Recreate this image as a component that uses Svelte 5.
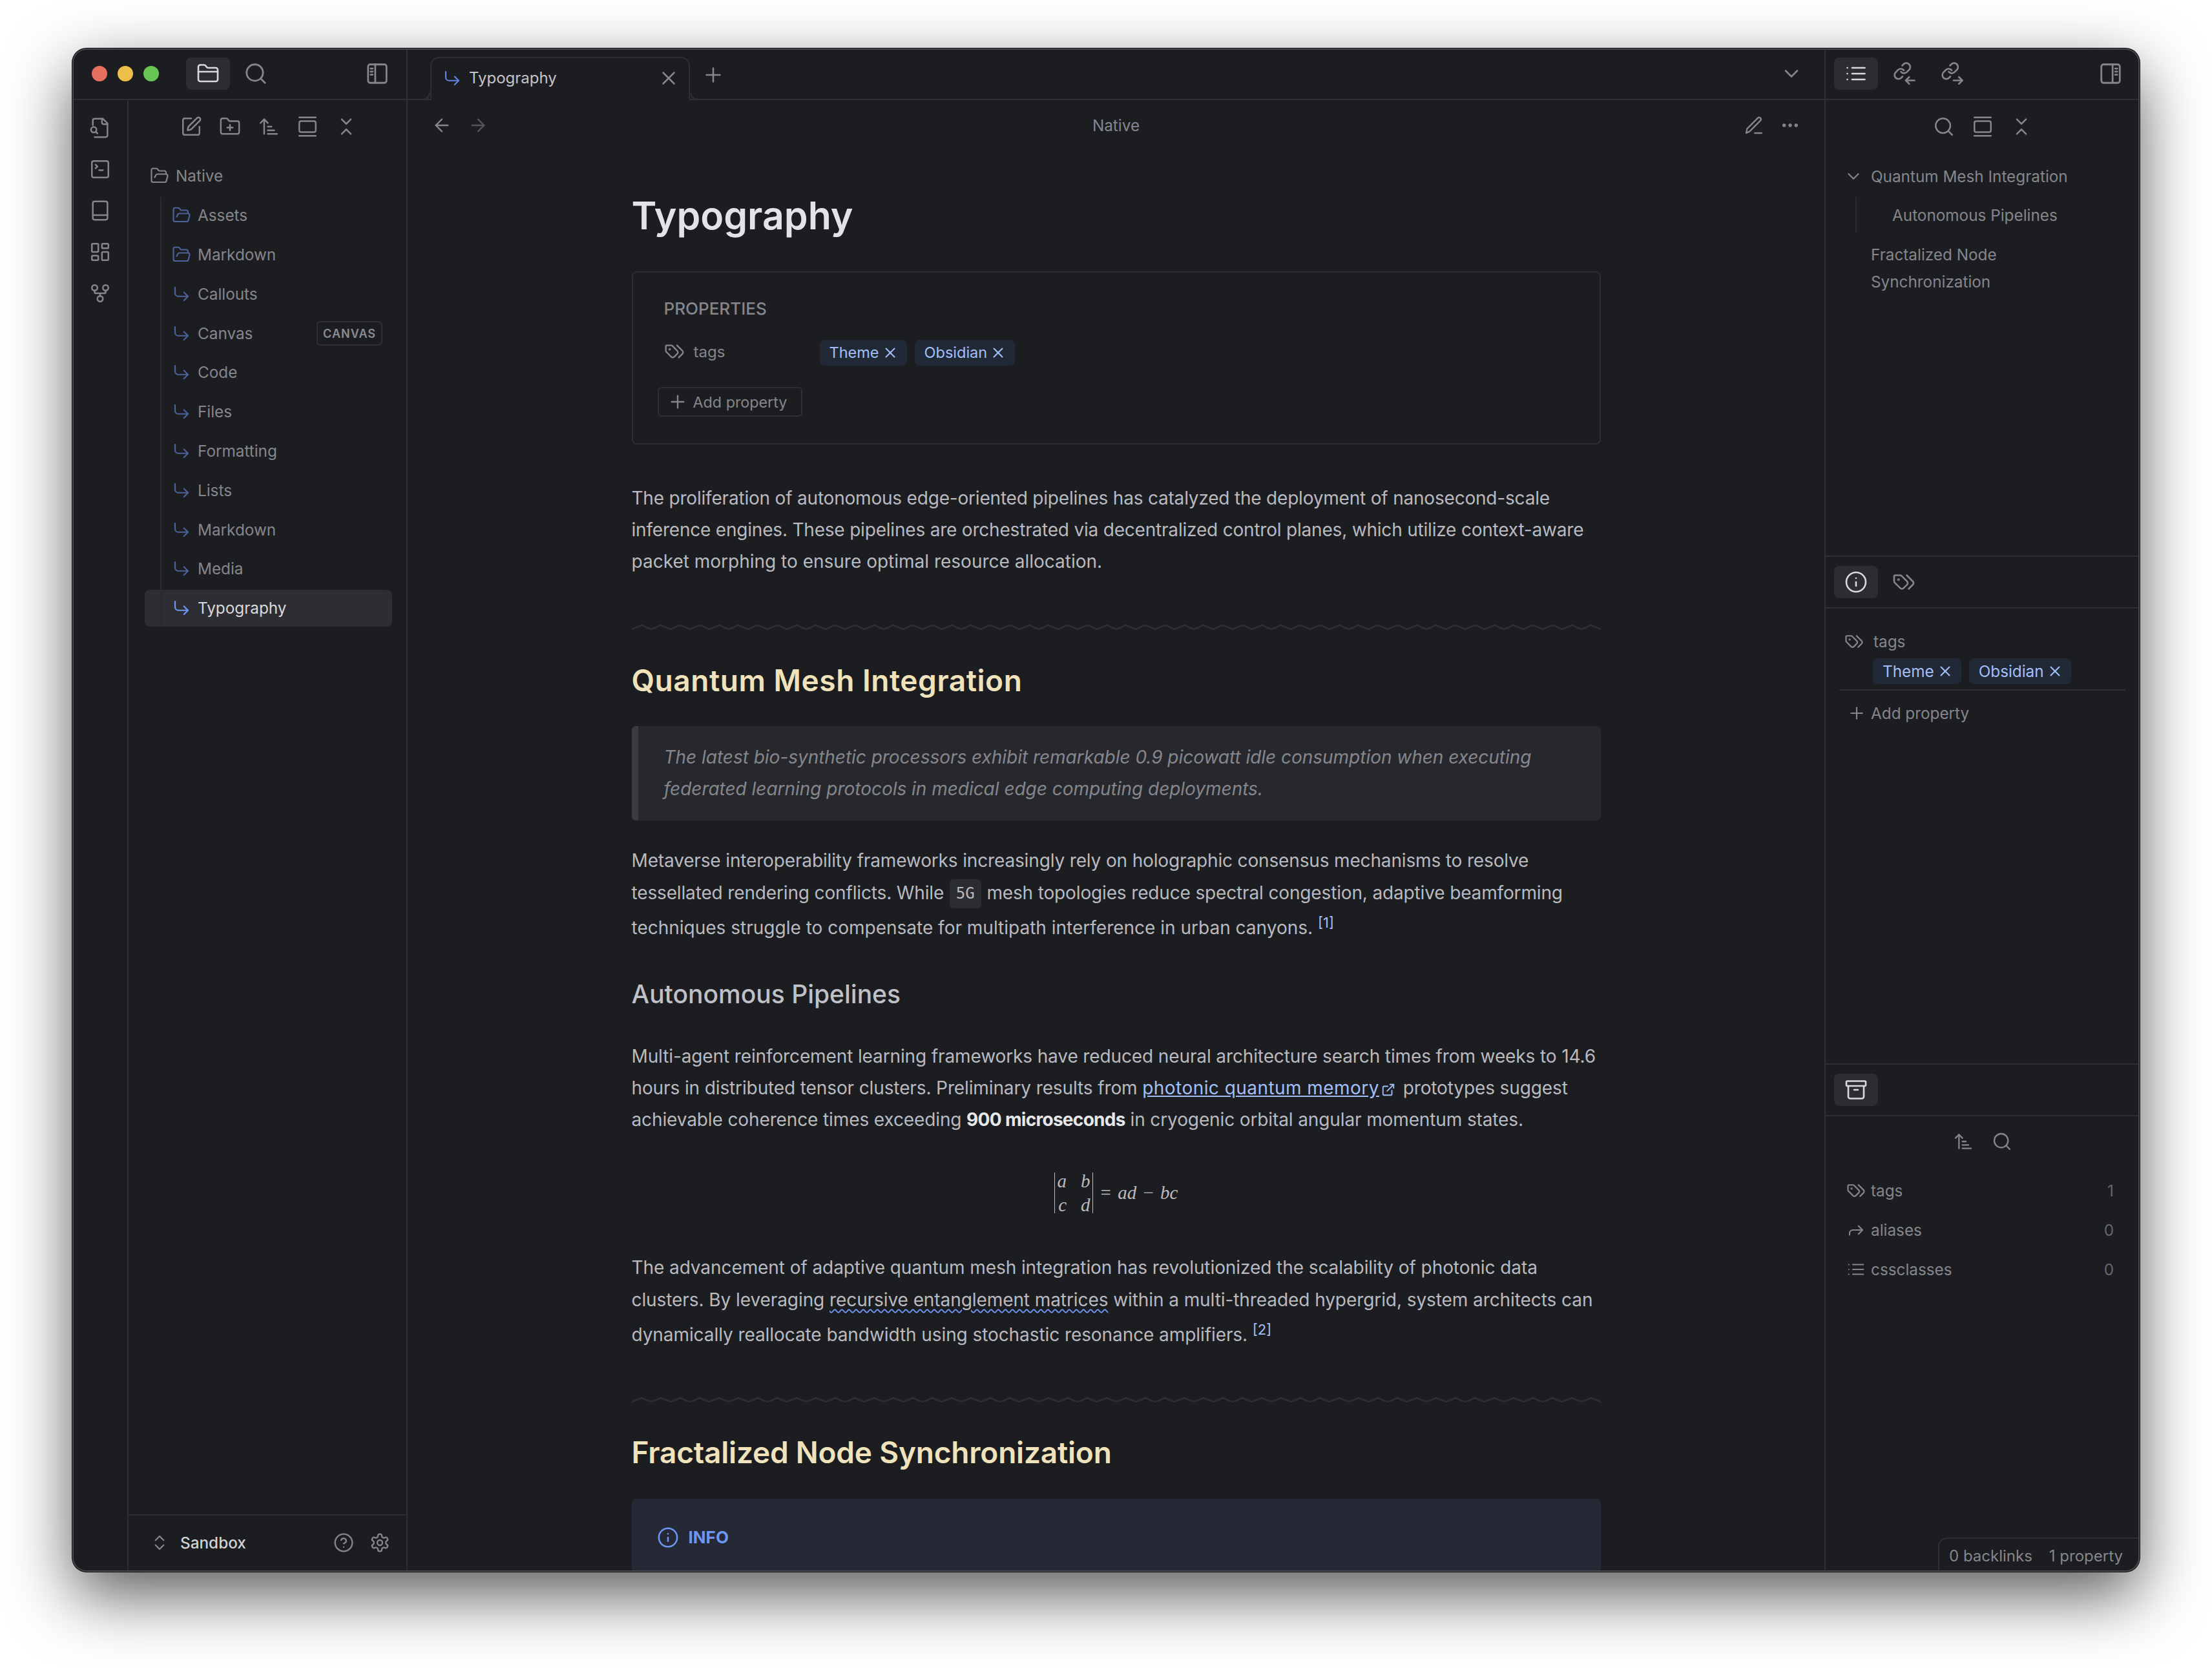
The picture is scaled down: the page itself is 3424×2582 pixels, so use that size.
<script>
	const icons = {
		folder: '<path d="M20 20a2 2 0 0 0 2-2V8a2 2 0 0 0-2-2h-7.9a2 2 0 0 1-1.69-.9L9.6 3.9A2 2 0 0 0 7.93 3H4a2 2 0 0 0-2 2v13a2 2 0 0 0 2 2Z"/><path d="M2 10h20"/>',
		search: '<circle cx="11" cy="11" r="8"/><path d="m21 21-4.3-4.3"/>',
		sideLeft: '<rect x="3" y="3" width="18" height="18" rx="2"/><path d="M10 3v18M5.5 7h2M5.5 10h2M5.5 13h2"/>',
		sideRight: '<rect x="3" y="3" width="18" height="18" rx="2"/><path d="M14 3v18M16.5 7h2M16.5 10h2M16.5 13h2"/>',
		fileSearch: '<path d="M14 2v4a2 2 0 0 0 2 2h4"/><path d="M6 22h12a2 2 0 0 0 2-2V7l-5-5H6a2 2 0 0 0-2 2v5"/><path d="m9 18-1.5-1.5"/><circle cx="5" cy="14" r="3"/>',
		terminal: '<path d="m7 11 2-2-2-2"/><path d="M11 13h4"/><rect x="3" y="3" width="18" height="18" rx="2"/>',
		book: '<rect x="4" y="2" width="16" height="20" rx="2"/><path d="M4 17h16"/>',
		dashboard: '<rect x="3" y="3" width="7" height="9" rx="1"/><rect x="14" y="3" width="7" height="5" rx="1"/><rect x="14" y="12" width="7" height="9" rx="1"/><rect x="3" y="16" width="7" height="5" rx="1"/>',
		fork: '<circle cx="12" cy="18" r="3"/><circle cx="6" cy="6" r="3"/><circle cx="18" cy="6" r="3"/><path d="M18 9v2c0 .6-.4 1-1 1H7c-.6 0-1-.4-1-1V9"/><path d="M12 12v3"/>',
		edit: '<path d="M12 3H5a2 2 0 0 0-2 2v14a2 2 0 0 0 2 2h14a2 2 0 0 0 2-2v-7"/><path d="M18.375 2.625a1 1 0 0 1 3 3l-9.013 9.014a2 2 0 0 1-.853.505l-2.873.84a.5.5 0 0 1-.62-.62l.84-2.873a2 2 0 0 1 .506-.852z"/>',
		folderPlus: '<path d="M12 10v6"/><path d="M9 13h6"/><path d="M20 20a2 2 0 0 0 2-2V8a2 2 0 0 0-2-2h-7.9a2 2 0 0 1-1.69-.9L9.6 3.9A2 2 0 0 0 7.93 3H4a2 2 0 0 0-2 2v13a2 2 0 0 0 2 2Z"/>',
		sort: '<path d="m3 8 4-4 4 4"/><path d="M7 4v16"/><path d="M11 12h4"/><path d="M11 16h7"/><path d="M11 20h10"/>',
		expand: '<path d="M3 2h18"/><rect x="3" y="6" width="18" height="12" rx="2"/><path d="M3 22h18"/>',
		collapse: '<path d="m7 20 5-5 5 5"/><path d="m7 4 5 5 5-5"/>',
		folderOpen: '<path d="m6 14 1.5-2.9A2 2 0 0 1 9.24 10H20a2 2 0 0 1 1.94 2.5l-1.54 6a2 2 0 0 1-1.95 1.5H4a2 2 0 0 1-2-2V5a2 2 0 0 1 2-2h3.9a2 2 0 0 1 1.69.9l.81 1.2a2 2 0 0 0 1.67.9H18a2 2 0 0 1 2 2v2"/>',
		corner: '<path d="m15 10 5 5-5 5"/><path d="M4 4v7a4 4 0 0 0 4 4h12"/>',
		x: '<path d="M18 6 6 18"/><path d="m6 6 12 12"/>',
		plus: '<path d="M5 12h14"/><path d="M12 5v14"/>',
		left: '<path d="m12 19-7-7 7-7"/><path d="M19 12H5"/>',
		right: '<path d="M5 12h14"/><path d="m12 5 7 7-7 7"/>',
		down: '<path d="m6 9 6 6 6-6"/>',
		pencil: '<path d="M3 21l1-5L16.5 3.5a2 2 0 0 1 3 3L7 19z"/><path d="M13 21h8"/>',
		dots: '<circle cx="5" cy="12" r="1"/><circle cx="12" cy="12" r="1"/><circle cx="19" cy="12" r="1"/>',
		list: '<path d="M3 12h.01"/><path d="M3 18h.01"/><path d="M3 6h.01"/><path d="M8 12h13"/><path d="M8 18h13"/><path d="M8 6h13"/>',
		linkIn: '<path d="M9 10a4 4 0 0 0 6 .4l2.4-2.4a4 4 0 0 0-5.7-5.7l-1.4 1.4"/><path d="M12 8.6a4 4 0 0 0-6-.4L3.6 10.6a4 4 0 0 0 5.7 5.7l1.4-1.4"/><path d="M23 19h-9"/><path d="m17.5 15.5-3.5 3.5 3.5 3.5"/>',
		linkOut: '<path d="M9 10a4 4 0 0 0 6 .4l2.4-2.4a4 4 0 0 0-5.7-5.7l-1.4 1.4"/><path d="M12 8.6a4 4 0 0 0-6-.4L3.6 10.6a4 4 0 0 0 5.7 5.7l1.4-1.4"/><path d="M14 19h9"/><path d="m19.5 15.5 3.5 3.5-3.5 3.5"/>',
		tags: '<path d="m15 5 6.3 6.3a2.4 2.4 0 0 1 0 3.4L17 19"/><path d="M9.586 5.586A2 2 0 0 0 8.172 5H3a1 1 0 0 0-1 1v5.172a2 2 0 0 0 .586 1.414L8.29 18.29a2.426 2.426 0 0 0 3.42 0l3.58-3.58a2.426 2.426 0 0 0 0-3.42z"/><circle cx="6.5" cy="9.5" r=".5"/>',
		info: '<circle cx="12" cy="12" r="10"/><path d="M12 16v-4"/><path d="M12 8h.01"/>',
		archive: '<rect x="2" y="3" width="20" height="5" rx="1"/><path d="M4 8v11a2 2 0 0 0 2 2h12a2 2 0 0 0 2-2V8"/><path d="M10 12h4"/>',
		forward: '<path d="m15 17 5-5-5-5"/><path d="M4 18v-2a4 4 0 0 1 4-4h12"/>',
		help: '<circle cx="12" cy="12" r="10"/><path d="M9.09 9a3 3 0 0 1 5.83 1c0 2-3 3-3 3"/><path d="M12 17h.01"/>',
		gear: '<path d="M12.22 2h-.44a2 2 0 0 0-2 2v.18a2 2 0 0 1-1 1.73l-.43.25a2 2 0 0 1-2 0l-.15-.08a2 2 0 0 0-2.73.73l-.22.38a2 2 0 0 0 .73 2.73l.15.1a2 2 0 0 1 1 1.72v.51a2 2 0 0 1-1 1.74l-.15.09a2 2 0 0 0-.73 2.73l.22.38a2 2 0 0 0 2.73.73l.15-.08a2 2 0 0 1 2 0l.43.25a2 2 0 0 1 1 1.73V20a2 2 0 0 0 2 2h.44a2 2 0 0 0 2-2v-.18a2 2 0 0 1 1-1.73l.43-.25a2 2 0 0 1 2 0l.15.08a2 2 0 0 0 2.73-.73l.22-.39a2 2 0 0 0-.73-2.73l-.15-.08a2 2 0 0 1-1-1.74v-.5a2 2 0 0 1 1-1.74l.15-.09a2 2 0 0 0 .73-2.73l-.22-.38a2 2 0 0 0-2.73-.73l-.15.08a2 2 0 0 1-2 0l-.43-.25a2 2 0 0 1-1-1.73V4a2 2 0 0 0-2-2z"/><circle cx="12" cy="12" r="3"/>',
		updown: '<path d="m7 15 5 5 5-5"/><path d="m7 9 5-5 5 5"/>',
		external: '<path d="M15 3h6v6"/><path d="M10 14 21 3"/><path d="M18 13v6a2 2 0 0 1-2 2H5a2 2 0 0 1-2-2V8a2 2 0 0 1 2-2h6"/>'
	};

	const railIcons = ['fileSearch', 'terminal', 'book', 'dashboard', 'fork'];
	const navIcons = ['edit', 'folderPlus', 'sort', 'expand', 'collapse'];
	const folders = ['Assets', 'Markdown'];
	const files = ['Callouts', 'Canvas', 'Code', 'Files', 'Formatting', 'Lists', 'Markdown', 'Media', 'Typography'];
	const propRows = [
		{ icon: 'tags', name: 'tags', count: 1 },
		{ icon: 'forward', name: 'aliases', count: 0 },
		{ icon: 'list', name: 'cssclasses', count: 0 }
	];
</script>

{#snippet icon(name, size = 34, sw = 1.75)}
	<svg width={size} height={size} viewBox="0 0 24 24" fill="none" stroke="currentColor" stroke-width={sw} stroke-linecap="round" stroke-linejoin="round">
		{@html icons[name]}
	</svg>
{/snippet}

{#snippet squiggle()}
	<svg class="hr" width="1500" height="10">
		<defs>
			<pattern id="zig" width="30" height="10" patternUnits="userSpaceOnUse">
				<path d="M0 8 L15 2 L30 8" fill="none" stroke="#2f3036" stroke-width="2.2" />
			</pattern>
		</defs>
		<rect width="1500" height="10" fill="url(#zig)" />
	</svg>
{/snippet}

{#snippet chip(label)}
	<span class="chip">{label}{@render icon('x', 26, 1.9)}</span>
{/snippet}

<div class="page">
	<div class="window">
		<aside class="left">
			<header class="titlebar">
				<div class="lights">
					<i class="red"></i>
					<i class="yellow"></i>
					<i class="green"></i>
				</div>
				<button class="tabbtn active">{@render icon('folder', 36)}</button>
				<button class="tabbtn">{@render icon('search', 38)}</button>
				<button class="tabbtn end">{@render icon('sideLeft', 38)}</button>
			</header>
			<div class="left-body">
				<nav class="rail">
					{#each railIcons as name}
						<span class="rail-item">{@render icon(name)}</span>
					{/each}
				</nav>
				<div class="files">
					<div class="toolbar">
						{#each navIcons as name}
							<span class="tool">{@render icon(name)}</span>
						{/each}
					</div>
					<div class="tree">
						<div class="row root">{@render icon('folderOpen', 30)}<span>Native</span></div>
						<div class="children">
							{#each folders as name}
								<div class="row child">
									<span class="ficon">{@render icon('folderOpen', 30)}</span><span>{name}</span>
								</div>
							{/each}
							{#each files as name}
								<div class="row child" class:selected={name === 'Typography'}>
									<span class="ficon">{@render icon('corner', 30)}</span><span>{name}</span>
									{#if name === 'Canvas'}<em class="badge">CANVAS</em>{/if}
								</div>
							{/each}
						</div>
					</div>
					<footer class="vault">
						<span class="vault-sw">{@render icon('updown', 30)}</span>
						<b>Sandbox</b>
						<span class="vault-ic">{@render icon('help', 32)}</span>
						<span class="vault-ic">{@render icon('gear', 32)}</span>
					</footer>
				</div>
			</div>
		</aside>

		<main class="main">
			<header class="tabstrip">
				<div class="tab">
					<span class="tab-ic">{@render icon('corner', 30)}</span>
					<span class="tab-name">Typography</span>
					<span class="tab-x">{@render icon('x', 34)}</span>
				</div>
				<span class="newtab">{@render icon('plus', 36)}</span>
				<span class="strip-end">{@render icon('down', 36)}</span>
			</header>
			<div class="viewbar">
				<div class="viewnav">
					<span class="navbtn">{@render icon('left', 32)}</span>
					<span class="navbtn off">{@render icon('right', 32)}</span>
				</div>
				<div class="viewtitle">Native</div>
				<div class="viewact">
					<span class="navbtn">{@render icon('pencil', 32)}</span>
					<span class="navbtn">{@render icon('dots', 32, 2)}</span>
				</div>
			</div>
			<div class="scroll">
				<article class="note">
					<h1>Typography</h1>
					<section class="props">
						<div class="props-head">PROPERTIES</div>
						<div class="prop-line">
							<span class="prop-key">{@render icon('tags', 32)}<span>tags</span></span>
							<span class="prop-val">{@render chip('Theme')}{@render chip('Obsidian')}</span>
						</div>
						<button class="add">{@render icon('plus', 32)}<span>Add property</span></button>
					</section>

					<p class="p1">
						The proliferation of autonomous edge-oriented pipelines has catalyzed the deployment of nanosecond-scale<br />
						inference engines. These pipelines are orchestrated via decentralized control planes, which utilize context-aware
						<span class="ln loose">packet morphing to ensure optimal resource allocation.</span>
					</p>

					{@render squiggle()}

					<h2 class="wide">Quantum Mesh Integration</h2>
					<blockquote>
						The latest bio-synthetic processors exhibit remarkable 0.9 picowatt idle consumption when executing<br />
						federated learning protocols in medical edge computing deployments.
					</blockquote>

					<p class="p2">
						Metaverse interoperability frameworks increasingly rely on holographic consensus mechanisms to resolve
						<span class="ln ln2">tessellated rendering conflicts. While <code>5G</code> mesh topologies reduce spectral congestion, adaptive beamforming</span>
						<span class="ln ln3 loose">techniques struggle to compensate for multipath interference in urban canyons. <sup>[1]</sup></span>
					</p>

					<h3>Autonomous Pipelines</h3>
					<p class="p3">
						Multi-agent reinforcement learning frameworks have reduced neural architecture search times from weeks to 14.6<br />
						hours in distributed tensor clusters. Preliminary results from <a href="#memory">photonic quantum memory</a><span class="ext">{@render icon('external', 22, 2)}</span> prototypes suggest<br />
						achievable coherence times exceeding <strong>900 microseconds</strong> in cryogenic orbital angular momentum states.
					</p>

					<div class="math">
						<span class="matrix">
							<i>a</i><i>b</i><i>c</i><i>d</i>
						</span>
						<span class="eq">= <i>ad</i> − <i>bc</i></span>
					</div>

					<p class="p4">
						The advancement of adaptive quantum mesh integration has revolutionized the scalability of photonic data
						<span class="ln ln2">clusters. By leveraging <u>recursive entanglement matrices</u> within a multi-threaded hypergrid, system architects can</span>
						<span class="ln ln3">dynamically reallocate bandwidth using stochastic resonance amplifiers. <sup>[2]</sup></span>
					</p>

					{@render squiggle()}

					<h2 class="fract">Fractalized Node Synchronization</h2>
					<div class="callout">
						<div class="callout-title">{@render icon('info', 34)}<span>INFO</span></div>
					</div>
				</article>
			</div>
		</main>

		<aside class="right">
			<header class="titlebar rbar">
				<button class="tabbtn active">{@render icon('list', 36)}</button>
				<button class="tabbtn">{@render icon('linkIn', 36)}</button>
				<button class="tabbtn">{@render icon('linkOut', 36)}</button>
				<button class="tabbtn end">{@render icon('sideRight', 38)}</button>
			</header>
			<section class="outline">
				<div class="toolbar small">
					<span class="tool">{@render icon('search', 34)}</span>
					<span class="tool">{@render icon('expand', 34)}</span>
					<span class="tool">{@render icon('collapse', 34)}</span>
				</div>
				<div class="ol-row"><span class="ol-chev">{@render icon('down', 30)}</span><span>Quantum Mesh Integration</span></div>
				<div class="ol-sub">Autonomous Pipelines</div>
				<div class="ol-last">Fractalized Node<br />Synchronization</div>
			</section>
			<section class="rtabs">
				<button class="tabbtn active">{@render icon('info', 36)}</button>
				<button class="tabbtn">{@render icon('tags', 36)}</button>
			</section>
			<section class="fileprops">
				<div class="fp-key">{@render icon('tags', 30)}<span>tags</span></div>
				<div class="fp-val">{@render chip('Theme')}{@render chip('Obsidian')}</div>
				<div class="fp-add">{@render icon('plus', 30)}<span>Add property</span></div>
			</section>
			<section class="rtabs low">
				<button class="tabbtn active">{@render icon('archive', 36)}</button>
			</section>
			<section class="allprops">
				<div class="toolbar tiny">
					<span class="tool">{@render icon('sort', 32)}</span>
					<span class="tool">{@render icon('search', 32)}</span>
				</div>
				{#each propRows as row}
					<div class="ap-row">
						{@render icon(row.icon, 30)}<span class="ap-name">{row.name}</span><span class="ap-count">{row.count}</span>
					</div>
				{/each}
			</section>
		</aside>

		<div class="status"><span>0 backlinks</span><span>1 property</span></div>
	</div>
</div>

<style>
	:global(body) {
		margin: 0;
		background: #fff;
	}

	.page {
		width: 3424px;
		height: 2582px;
		padding: 75px 112px 0;
		box-sizing: border-box;
		overflow: hidden;
		font-family: Inter, 'Liberation Sans', sans-serif;
		font-size: 24.3px;
		color: #85868c;
	}

	.window {
		position: relative;
		display: flex;
		width: 3200px;
		height: 2358px;
		background: #1c1d21;
		border-radius: 22px;
		overflow: hidden;
		box-shadow: 0 0 0 1px #111, 0 36px 100px rgba(0, 0, 0, 0.65);
	}

	.window::after {
		content: '';
		position: absolute;
		inset: 0;
		border-radius: 22px;
		box-shadow: inset 0 0 0 2px #47484d;
		pointer-events: none;
	}

	button {
		border: 0;
		background: none;
		color: inherit;
		font: inherit;
		padding: 0;
	}

	svg {
		display: block;
		flex: none;
	}

	.titlebar {
		display: flex;
		align-items: center;
		height: 80px;
		box-sizing: border-box;
		border-bottom: 2px solid #2e2f36;
	}

	.left {
		display: flex;
		flex-direction: column;
		flex: none;
		width: 519px;
		border-right: 2px solid #2e2f36;
		box-sizing: border-box;
	}

	.lights {
		display: flex;
		gap: 16px;
		margin: 0 42px 0 30px;
	}

	.lights i {
		width: 24px;
		height: 24px;
		border-radius: 50%;
	}

	.red {
		background: #e76f5f;
	}

	.yellow {
		background: #edbe4a;
	}

	.green {
		background: #67c653;
	}

	.tabbtn {
		display: flex;
		align-items: center;
		justify-content: center;
		flex: none;
		width: 68px;
		height: 50px;
		margin-right: 6px;
		border-radius: 8px;
		color: #85868c;
	}

	.tabbtn.active {
		background: #2c2d32;
		color: #d8d9dc;
	}

	.tabbtn.end {
		margin-left: auto;
		margin-right: 11px;
	}

	.left-body {
		display: flex;
		flex: 1;
		min-height: 0;
	}

	.rail {
		display: flex;
		flex-direction: column;
		align-items: center;
		flex: none;
		width: 87px;
		box-sizing: border-box;
		padding-top: 11px;
		border-right: 2px solid #2e2f36;
		color: #85868c;
	}

	.rail-item {
		display: flex;
		align-items: center;
		justify-content: center;
		height: 64px;
	}

	.files {
		display: flex;
		flex-direction: column;
		flex: 1;
		min-width: 0;
	}

	.toolbar {
		display: flex;
		justify-content: center;
		align-items: center;
		height: 82px;
		color: #85868c;
		padding-left: 4px;
	}

	.tool {
		display: flex;
		justify-content: center;
		width: 60px;
	}

	.tree {
		flex: 1;
		padding: 7px 22px 0 25px;
	}

	.row {
		display: flex;
		align-items: center;
		height: 56.8px;
		margin-bottom: 4px;
		border-radius: 8px;
		white-space: nowrap;
	}

	.root {
		padding-left: 8px;
		gap: 10px;
	}

	.children {
		position: relative;
	}

	.children::before {
		content: '';
		position: absolute;
		left: 24px;
		top: 0;
		bottom: 0;
		width: 2px;
		background: #2a2b30;
		z-index: 1;
	}

	.child {
		position: relative;
		padding-left: 42px;
		gap: 10px;
	}

	.ficon {
		color: #4a6398;
	}

	.selected {
		background: #2d2e33;
		color: #d8d9dc;
	}

	.selected .ficon {
		color: #6e97f3;
	}

	.badge {
		margin-left: auto;
		margin-right: 15px;
		padding: 0 8px;
		height: 38px;
		line-height: 35px;
		box-sizing: border-box;
		border: 2px solid #2e2f36;
		border-radius: 6px;
		font-style: normal;
		font-size: 18px;
		font-weight: 600;
		letter-spacing: 1px;
		color: #8b8c92;
	}

	.vault {
		display: flex;
		align-items: center;
		height: 89px;
		border-top: 2px solid #2e2f36;
		box-sizing: border-box;
		padding: 0 13px 4px 33px;
		color: #85868c;
	}

	.vault-sw {
		margin-right: 17px;
	}

	.vault b {
		flex: 1;
		font-weight: 500;
		color: #d0d1d4;
	}

	.vault-ic {
		width: 56px;
		display: flex;
		justify-content: center;
	}

	.main {
		display: flex;
		flex-direction: column;
		flex: 1;
		min-width: 0;
		position: relative;
	}

	.tabstrip {
		display: flex;
		align-items: flex-end;
		height: 80px;
		flex: none;
		box-sizing: border-box;
		border-bottom: 2px solid #2e2f36;
		padding-left: 35px;
		color: #85868c;
	}

	.tab {
		position: relative;
		display: flex;
		align-items: center;
		width: 402px;
		height: 67px;
		margin-bottom: -2px;
		box-sizing: border-box;
		padding: 0 14px 4px 17px;
		background: #1c1d21;
		border: 2px solid #2e2f36;
		border-bottom: 0;
		border-radius: 14px 14px 0 0;
		color: #c4c5c9;
		font-size: 24px;
	}

	.tab::before,
	.tab::after {
		content: '';
		position: absolute;
		bottom: 0;
		width: 12px;
		height: 12px;
		box-sizing: border-box;
		background: #1c1d21;
		border-bottom: 2px solid #2e2f36;
	}

	.tab::before {
		left: -14px;
		border-right: 2px solid #2e2f36;
		border-bottom-right-radius: 12px;
	}

	.tab::after {
		right: -14px;
		border-left: 2px solid #2e2f36;
		border-bottom-left-radius: 12px;
	}

	.tab-ic {
		color: #5f85dc;
		margin-right: 11px;
	}

	.tab-name {
		flex: 1;
	}

	.tab-x {
		color: #85868c;
	}

	.newtab {
		align-self: center;
		margin-left: 18px;
		margin-top: 3px;
	}

	.strip-end {
		align-self: center;
		margin-left: auto;
		margin-right: 33px;
	}

	.viewbar {
		display: grid;
		grid-template-columns: 1fr auto 1fr;
		align-items: center;
		height: 78px;
		flex: none;
		padding: 0 25px;
		color: #85868c;
	}

	.viewnav,
	.viewact {
		display: flex;
	}

	.viewact {
		justify-content: flex-end;
	}

	.navbtn {
		display: flex;
		justify-content: center;
		width: 56px;
	}

	.navbtn.off {
		color: #55565b;
	}

	.scroll {
		flex: 1;
		min-height: 0;
		overflow: hidden;
	}

	.note {
		width: 1500px;
		margin: 0 auto;
		padding-top: 65px;
		font-size: 28px;
		line-height: 49px;
		color: #b8bac0;
	}

	h1 {
		margin: 0 0 50px;
		font-size: 59px;
		line-height: 72px;
		font-weight: 600;
		color: #e2e3e6;
	}

	.props {
		height: 268px;
		box-sizing: border-box;
		padding: 31px 40px 0 48px;
		border: 2px solid #2e2f36;
		border-radius: 8px;
		font-family: Inter, sans-serif;
		font-size: 24px;
		color: #85868c;
	}

	.props-head {
		font-size: 26px;
		line-height: 50px;
		font-weight: 500;
	}

	.prop-line {
		display: flex;
		align-items: center;
		height: 40px;
		margin-top: 23px;
	}

	.prop-key {
		display: flex;
		align-items: center;
		gap: 14px;
		width: 241px;
		margin-top: -4px;
	}

	.prop-val {
		display: flex;
		gap: 12px;
	}

	.chip {
		display: inline-flex;
		align-items: center;
		gap: 4px;
		height: 40px;
		padding: 0 13px 0 15px;
		border-radius: 8px;
		background: #222936;
		color: #a3bff8;
		font-size: 23.5px;
		line-height: 40px;
	}

	.add {
		display: flex;
		align-items: center;
		gap: 8px;
		width: 224px;
		height: 46px;
		box-sizing: border-box;
		margin: 33px 0 0 -10px;
		padding-left: 13px;
		border: 2px solid #2e2f36;
		border-radius: 6px;
		font-size: 23.3px;
		color: #85868c;
	}

	p {
		margin: 0;
		white-space: nowrap;
	}

	.ln {
		display: block;
	}

	.ln2 {
		margin-top: 1px;
	}

	.ln3 {
		margin-top: 5px;
	}

	.loose {
		letter-spacing: 0;
	}

	.p1 {
		margin-top: 59px;
		letter-spacing: -0.2px;
	}

	.hr {
		display: block;
		margin-top: 72px;
	}

	h2 {
		margin: 47px 0 0;
		font-size: 46px;
		line-height: 60px;
		font-weight: 600;
		color: #f0e2ba;
	}

	h2.wide {
		letter-spacing: 0.55px;
	}

	h2.fract {
		margin-top: 46px;
		letter-spacing: -0.2px;
	}

	blockquote {
		margin: 41px 0 0;
		padding: 24px 0 24px 40px;
		background: #27282d;
		border-left: 10px solid #3a3b40;
		border-radius: 6px;
		font-style: italic;
		letter-spacing: -0.03px;
		color: #85868c;
		white-space: nowrap;
	}

	.p2 {
		margin-top: 38px;
		letter-spacing: -0.15px;
	}

	code {
		display: inline-block;
		height: 45px;
		line-height: 45px;
		padding: 0 10px;
		margin: 0 1px;
		border-radius: 6px;
		background: #2b2c32;
		font-family: 'DejaVu Sans Mono', monospace;
		font-size: 24px;
		letter-spacing: 0;
		vertical-align: 1px;
	}

	sup {
		font-size: 22px;
		line-height: 0;
		color: #a3bff8;
		letter-spacing: 0;
	}

	h3 {
		margin: 52px 0 0;
		font-size: 39px;
		line-height: 52px;
		font-weight: 500;
		color: #bfc1c7;
	}

	.p3 {
		margin-top: 46px;
		letter-spacing: -0.12px;
	}

	a {
		color: #a3bff8;
		text-decoration: underline;
		letter-spacing: 0.45px;
	}

	.ext {
		display: inline-block;
		color: #a3bff8;
		margin: 0 4px 0 3px;
		vertical-align: -4px;
	}

	strong {
		font-weight: 700;
		letter-spacing: -0.7px;
		color: #e6e7e9;
	}

	.math {
		display: flex;
		justify-content: center;
		align-items: center;
		gap: 12px;
		height: 63px;
		margin-top: 57px;
		font-family: 'Liberation Serif', serif;
		font-size: 29px;
		line-height: 1;
		word-spacing: 3px;
		color: #b8bac0;
	}

	.matrix {
		display: grid;
		grid-template-columns: auto auto;
		column-gap: 22px;
		row-gap: 8px;
		height: 63px;
		padding: 0 3px 0 4px;
		align-content: center;
		justify-items: end;
		border-left: 1px solid #b8bac0;
		border-right: 1px solid #b8bac0;
	}

	.p4 {
		margin: 60px 0 -1px;
		letter-spacing: -0.08px;
	}

	u {
		text-decoration: underline wavy #6e97f3 2px;
		text-underline-offset: 4px;
	}

	.callout {
		margin-top: 42px;
		height: 200px;
		padding: 42px 0 0 39px;
		box-sizing: border-box;
		background: #252935;
		border-radius: 8px 8px 0 0;
		color: #6e97f3;
	}

	.callout-title {
		display: flex;
		align-items: center;
		gap: 15px;
		font-family: Inter, sans-serif;
		font-size: 26px;
		line-height: 36px;
		font-weight: 700;
	}

	.right {
		display: flex;
		flex-direction: column;
		flex: none;
		width: 488px;
		border-left: 2px solid #2e2f36;
		box-sizing: border-box;
	}

	.rbar {
		padding-left: 13px;
	}

	.outline {
		height: 707px;
		flex: none;
		box-sizing: border-box;
		border-bottom: 2px solid #2e2f36;
	}

	.small {
		padding-left: 0;
	}

	.ol-row {
		display: flex;
		align-items: center;
		gap: 12px;
		height: 56px;
		margin-top: 8px;
		padding-left: 28px;
		white-space: nowrap;
	}

	.ol-sub {
		height: 56px;
		line-height: 56px;
		margin: 4px 0 0 46px;
		padding-left: 55px;
		border-left: 2px solid #2a2b30;
	}

	.ol-last {
		margin: 12px 0 0 70px;
		line-height: 42px;
	}

	.rtabs {
		display: flex;
		align-items: center;
		flex: none;
		height: 80px;
		box-sizing: border-box;
		padding-left: 13px;
		border-bottom: 2px solid #2e2f36;
	}

	.fileprops {
		height: 706px;
		flex: none;
		box-sizing: border-box;
		padding: 34px 22px 0 21px;
		border-bottom: 2px solid #2e2f36;
	}

	.fp-key {
		display: flex;
		align-items: center;
		gap: 15px;
		height: 34px;
		padding-left: 8px;
	}

	.fp-val {
		display: flex;
		gap: 12px;
		padding: 9px 0 8px 52px;
		border-bottom: 2px solid #2e2f36;
	}

	.fp-val .chip {
		font-size: 24.3px;
		padding-right: 12px;
	}

	.fp-add {
		display: flex;
		align-items: center;
		gap: 7px;
		height: 70px;
		padding-left: 12px;
	}

	.tiny {
		height: 78px;
		margin-bottom: 6px;
		padding-left: 8px;
	}

	.allprops {
		flex: 1;
		padding: 0 40px 0 32px;
	}

	.ap-row {
		display: flex;
		align-items: center;
		gap: 8px;
		height: 61px;
		color: #85868c;
	}

	.ap-name {
		flex: 1;
	}

	.ap-count {
		color: #65666b;
	}

	.status {
		position: absolute;
		right: 0;
		bottom: 0;
		display: flex;
		gap: 26px;
		height: 53px;
		box-sizing: border-box;
		padding: 0 26px 0 15px;
		line-height: 53px;
		font-size: 24px;
		background: #1c1d21;
		border: 2px solid #2e2f36;
		border-width: 2px 0 0 2px;
		border-radius: 14px 0 0 0;
	}
</style>
